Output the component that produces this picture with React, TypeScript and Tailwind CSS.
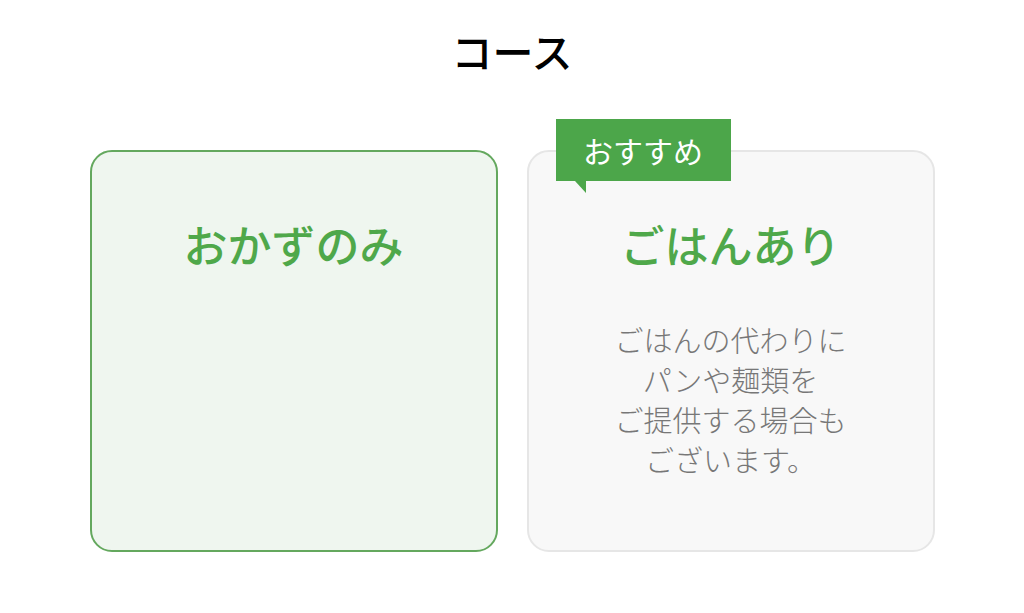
// Course selection: two option cards, the second with a "recommended" badge
const font = { fontFamily: '"Noto Sans CJK JP", "Noto Sans", sans-serif' };

interface CourseCardProps {
  title: string;
  selected?: boolean;
  recommended?: boolean;
  lines?: string[];
}

function CourseCard({ title, selected, recommended, lines }: CourseCardProps) {
  return (
    <div
      className={
        selected
          ? "relative flex h-[402px] w-[408px] flex-col items-center rounded-[22px] border-[2.5px] border-[#64a85e] bg-[#eff6ef] pt-[62px]"
          : "relative flex h-[402px] w-[408px] flex-col items-center rounded-[22px] border-2 border-[#e6e6e6] bg-[#f8f8f8] pt-[62px]"
      }
    >
      {recommended && (
        <div className="absolute left-[27px] top-[-33px]">
          <div className="flex h-[62px] w-[175px] items-center justify-center bg-[#4ca64a] text-[30px] leading-none text-white">
            おすすめ
          </div>
          <div className="ml-[19px] h-0 w-0 border-l-[11px] border-t-[12px] border-l-transparent border-t-[#4ca64a]" />
        </div>
      )}
      <h2 className="text-[44px] font-medium leading-[60px] text-[#4fa84a]">{title}</h2>
      {lines && (
        <div className="mt-[45px] text-center text-[29px] font-light leading-[40px] text-[#777777]">
          {lines.map((l) => (
            <p key={l}>{l}</p>
          ))}
        </div>
      )}
    </div>
  );
}

export default function App() {
  return (
    <div className="flex h-[613px] w-full flex-col items-center bg-white" style={font}>
      <h1 className="mt-[24px] text-[41px] font-medium leading-[52px] text-black">コース</h1>
      <div className="mt-[74px] flex gap-[29px]">
        <CourseCard title="おかずのみ" selected />
        <CourseCard
          title="ごはんあり"
          recommended
          lines={["ごはんの代わりに", "パンや麺類を", "ご提供する場合も", "ございます。"]}
        />
      </div>
    </div>
  );
}
